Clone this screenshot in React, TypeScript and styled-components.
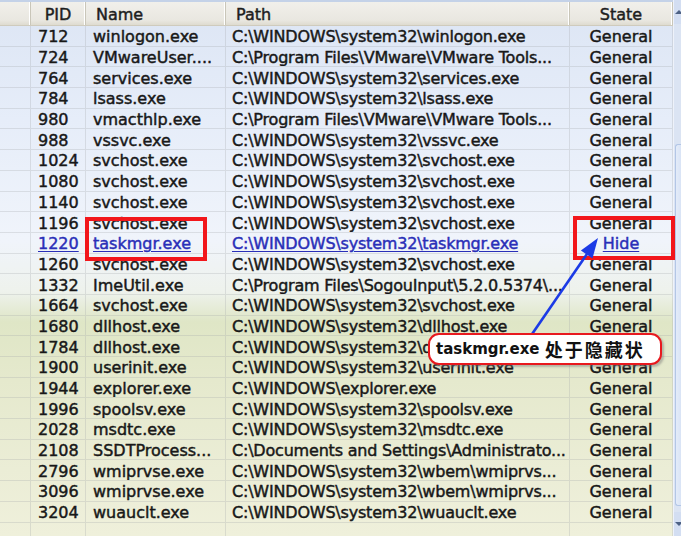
import styled, { createGlobalStyle } from 'styled-components';

type Proc = {
  pid: number;
  name: string;
  path: string;
  state: string;
};

const processes: Proc[] = [
  { pid: 712, name: 'winlogon.exe', path: 'C:\\WINDOWS\\system32\\winlogon.exe', state: 'General' },
  { pid: 724, name: 'VMwareUser....', path: 'C:\\Program Files\\VMware\\VMware Tools...', state: 'General' },
  { pid: 764, name: 'services.exe', path: 'C:\\WINDOWS\\system32\\services.exe', state: 'General' },
  { pid: 784, name: 'lsass.exe', path: 'C:\\WINDOWS\\system32\\lsass.exe', state: 'General' },
  { pid: 980, name: 'vmacthlp.exe', path: 'C:\\Program Files\\VMware\\VMware Tools...', state: 'General' },
  { pid: 988, name: 'vssvc.exe', path: 'C:\\WINDOWS\\system32\\vssvc.exe', state: 'General' },
  { pid: 1024, name: 'svchost.exe', path: 'C:\\WINDOWS\\system32\\svchost.exe', state: 'General' },
  { pid: 1080, name: 'svchost.exe', path: 'C:\\WINDOWS\\system32\\svchost.exe', state: 'General' },
  { pid: 1140, name: 'svchost.exe', path: 'C:\\WINDOWS\\system32\\svchost.exe', state: 'General' },
  { pid: 1196, name: 'svchost.exe', path: 'C:\\WINDOWS\\system32\\svchost.exe', state: 'General' },
  { pid: 1220, name: 'taskmgr.exe', path: 'C:\\WINDOWS\\system32\\taskmgr.exe', state: 'Hide' },
  { pid: 1260, name: 'svchost.exe', path: 'C:\\WINDOWS\\system32\\svchost.exe', state: 'General' },
  { pid: 1332, name: 'ImeUtil.exe', path: 'C:\\Program Files\\SogouInput\\5.2.0.5374\\...', state: 'General' },
  { pid: 1664, name: 'svchost.exe', path: 'C:\\WINDOWS\\system32\\svchost.exe', state: 'General' },
  { pid: 1680, name: 'dllhost.exe', path: 'C:\\WINDOWS\\system32\\dllhost.exe', state: 'General' },
  { pid: 1784, name: 'dllhost.exe', path: 'C:\\WINDOWS\\system32\\dllhost.exe', state: 'General' },
  { pid: 1900, name: 'userinit.exe', path: 'C:\\WINDOWS\\system32\\userinit.exe', state: 'General' },
  { pid: 1944, name: 'explorer.exe', path: 'C:\\WINDOWS\\explorer.exe', state: 'General' },
  { pid: 1996, name: 'spoolsv.exe', path: 'C:\\WINDOWS\\system32\\spoolsv.exe', state: 'General' },
  { pid: 2028, name: 'msdtc.exe', path: 'C:\\WINDOWS\\system32\\msdtc.exe', state: 'General' },
  { pid: 2108, name: 'SSDTProcess...', path: 'C:\\Documents and Settings\\Administrato...', state: 'General' },
  { pid: 2796, name: 'wmiprvse.exe', path: 'C:\\WINDOWS\\system32\\wbem\\wmiprvs...', state: 'General' },
  { pid: 3096, name: 'wmiprvse.exe', path: 'C:\\WINDOWS\\system32\\wbem\\wmiprvs...', state: 'General' },
  { pid: 3204, name: 'wuauclt.exe', path: 'C:\\WINDOWS\\system32\\wuauclt.exe', state: 'General' },
];

const COLUMNS = '31px 55px 140px 344px 103px';

const App = () => {
  return (
    <>
      <GlobalStyle />
      <Screen>
        <ListView>
          <HeaderRow>
            <HeaderCell />
            <HeaderCell align="center">PID</HeaderCell>
            <HeaderCell>Name</HeaderCell>
            <HeaderCell>Path</HeaderCell>
            <HeaderCell align="center">State</HeaderCell>
          </HeaderRow>
          {processes.map((p) => {
            const hidden = p.state === 'Hide';
            return (
              <Row key={p.pid}>
                <Cell />
                <Cell hidden={hidden}>{p.pid}</Cell>
                <Cell hidden={hidden}>{p.name}</Cell>
                <PathCell hidden={hidden} pad={6}>
                  {p.path}
                </PathCell>
                <Cell hidden={hidden} align="center">
                  {p.state}
                </Cell>
              </Row>
            );
          })}
          <Row>
            <Cell />
            <Cell />
            <Cell />
            <Cell />
            <Cell />
          </Row>
        </ListView>
        <ScrollBar>
          <ScrollButton>
            <ScrollGlyph />
          </ScrollButton>
          <ScrollTrack>
            <ScrollThumb />
          </ScrollTrack>
          <ScrollButton>
            <ScrollGlyph down />
          </ScrollButton>
        </ScrollBar>

        <Marker style={{ left: 85, top: 217, width: 122, height: 44 }} />
        <Marker style={{ left: 573, top: 216, width: 102, height: 44 }} />

        <Pointer width="120" height="130" viewBox="0 0 120 130">
          <line x1="28" y1="120" x2="87" y2="34" stroke="#1c3be6" strokeWidth="2.6" />
          <polygon points="98,18 92.5,38.5 80.9,30.5" fill="#1c3be6" />
        </Pointer>

        <Callout>
          taskmgr.exe <Cjk>处于隐藏状</Cjk>
        </Callout>
      </Screen>
    </>
  );
};

const GlobalStyle = createGlobalStyle`
  html, body {
    margin: 0;
    padding: 0;
    background: #ffffff;
  }
`;

const Screen = styled.div`
  position: relative;
  width: 681px;
  height: 536px;
  overflow: hidden;
  display: flex;
  font-family: 'DejaVu Sans', Verdana, sans-serif;
  background: linear-gradient(
    180deg,
    #dce5f4 0px,
    #e6edf9 120px,
    #f0f4fb 240px,
    #eef2ec 292px,
    #dfe6c6 322px,
    #e5e9cd 380px,
    #ebedd6 470px,
    #eff0db 536px
  );
`;

const ListView = styled.div`
  flex: 0 0 673px;
  display: flex;
  flex-direction: column;
`;

const HeaderRow = styled.div`
  display: grid;
  grid-template-columns: ${COLUMNS};
  height: 23px;
  flex-shrink: 0;
  border-top: 2px solid #c4d2e8;
  background: linear-gradient(180deg, #f1f0eb 0%, #e9e7e0 80%, #dedbd0 100%);
  border-bottom: 1px solid #cfcbbd;
`;

const HeaderCell = styled.div<{ align?: 'left' | 'center' }>`
  display: flex;
  align-items: center;
  justify-content: ${({ align }) => (align === 'center' ? 'center' : 'flex-start')};
  padding-left: ${({ align }) => (align === 'center' ? 0 : 10)}px;
  padding-top: 1px;
  font-size: 16px;
  color: #1e1e1e;
  -webkit-text-stroke: 0.45px #1e1e1e;
  border-right: 1px solid #c9c6b9;
  box-shadow: inset -2px 0 0 -1px #ffffff;
`;

const Row = styled.div`
  display: grid;
  grid-template-columns: ${COLUMNS};
  height: 20.7px;
  flex-shrink: 0;
  box-sizing: border-box;
  border-bottom: 1px solid rgba(160, 165, 170, 0.28);
`;

const Cell = styled.div<{ hidden?: boolean; align?: 'left' | 'center'; pad?: number }>`
  display: flex;
  align-items: center;
  justify-content: ${({ align }) => (align === 'center' ? 'center' : 'flex-start')};
  padding-left: ${({ align, pad = 7 }) => (align === 'center' ? 0 : pad)}px;
  padding-top: 2px;
  white-space: nowrap;
  overflow: hidden;
  font-size: 16px;
  color: ${({ hidden }) => (hidden ? '#2a2fb8' : '#181818')};
  -webkit-text-stroke: 0.45px ${({ hidden }) => (hidden ? '#2a2fb8' : '#181818')};
  text-decoration: ${({ hidden }) => (hidden ? 'underline' : 'none')};
  text-underline-offset: 2px;
  border-right: 1px solid rgba(160, 165, 170, 0.28);
`;

const PathCell = styled(Cell)`
  letter-spacing: -0.2px;
`;

const ScrollBar = styled.div`
  flex: 0 0 14px;
  display: flex;
  flex-direction: column;
  background: #dbe4f3;
  border-left: 1px solid #eef2fa;
`;

const ScrollButton = styled.div`
  height: 24px;
  display: flex;
  align-items: center;
  justify-content: center;
  background: #d3def2;
`;

const ScrollGlyph = styled.div<{ down?: boolean }>`
  width: 0;
  height: 0;
  border-left: 4px solid transparent;
  border-right: 4px solid transparent;
  ${({ down }) => (down ? 'border-top' : 'border-bottom')}: 4px solid #4d6185;
  margin-left: -4px;
`;

const ScrollTrack = styled.div`
  flex: 1;
  padding: 120px 0 6px 1px;
  display: flex;
`;

const ScrollThumb = styled.div`
  flex: 1;
  border: 1px solid #b3c6e6;
  border-right: none;
  border-radius: 3px 0 0 3px;
  background: linear-gradient(90deg, #e4ecf9, #cbd9f1);
`;

const Marker = styled.div`
  position: absolute;
  box-sizing: border-box;
  border: 4px solid #f2161b;
`;

const Pointer = styled.svg`
  position: absolute;
  left: 500px;
  top: 220px;
  overflow: visible;
`;

const Callout = styled.div`
  position: absolute;
  left: 428px;
  top: 333px;
  width: 234px;
  height: 32px;
  box-sizing: border-box;
  display: flex;
  align-items: center;
  padding-left: 6px;
  background: #ffffff;
  border: 2.5px solid #e8191e;
  border-radius: 11px;
  box-shadow: 2px 2px 2px rgba(120, 120, 120, 0.45);
  font-family: 'DejaVu Sans', 'Noto Sans CJK SC', sans-serif;
  font-weight: bold;
  font-size: 15px;
  color: #111;
  white-space: pre;
`;

const Cjk = styled.span`
  font-family: 'Noto Sans CJK SC', sans-serif;
  font-weight: bold;
  font-size: 18px;
  letter-spacing: 2px;
`;

export default App;
